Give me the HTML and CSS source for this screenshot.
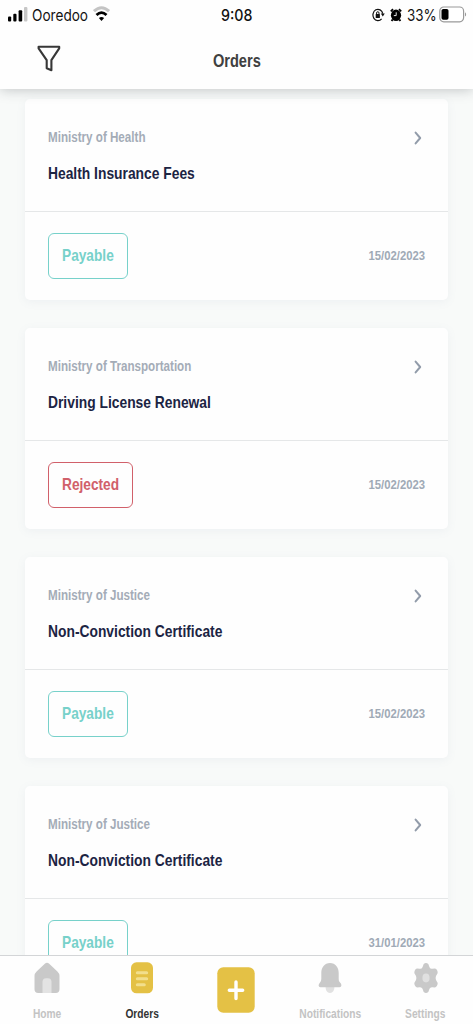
FILE: index.html
```html
<!DOCTYPE html>
<html lang="en">
<head>
<meta charset="utf-8">
<title>Orders</title>
<link rel="stylesheet" href="styles.css">
</head>
<body>
<div class="app">
  <header class="header">
    <div class="status">
      <div class="status-left">
        <svg class="signal" width="20" height="16" viewBox="0 0 20 16"><rect x="0" y="10.5" width="3.2" height="5" rx="1"/><rect x="5.3" y="7.7" width="3.2" height="7.8" rx="1"/><rect x="10.6" y="4.2" width="3.6" height="11.3" rx="1"/><rect x="16" y="1" width="3.4" height="14.5" rx="1" fill="#c6c6c6"/></svg>
        <span class="carrier">Ooredoo</span>
        <svg class="wifi" width="17" height="16" viewBox="0 0 17 16" fill="none"><path d="M1 5.2Q8.5-1.8 16 5.2" stroke="#c4c4c4" stroke-width="3"/><path d="M3.5 9Q8.5 4.3 13.5 9" stroke="#000" stroke-width="2.8"/><path d="M5.9 12Q8.5 10 11.1 12L8.5 15Z" fill="#000"/></svg>
      </div>
      <span class="time">9:08</span>
      <div class="status-right">
        <svg class="lock" width="13" height="14" viewBox="0 0 13 14" fill="none" stroke="#111"><path d="M9.6 10.9A5 5.7 0 1 1 10.8 5.6" stroke-width="1.2"/><path d="M8.8 5.6h4L10.8 8.6Z" fill="#111" stroke="none"/><rect x="3.7" y="6" width="4.2" height="4" rx=".6" fill="#111" stroke="none"/><path d="M4.6 6.3V5a1.2 1.3 0 0 1 2.4 0v1.3"/></svg>
        <svg class="alarm" width="12" height="14" viewBox="0 0 12 14"><ellipse cx="6" cy="7.3" rx="5.1" ry="5.8"/><path d="M.8 3.3 3 1.2M11.2 3.3 9 1.2M2.6 11.5 1.6 13.1M9.4 11.5l1 1.6" stroke="#000" stroke-width="1.8"/><path d="M6.2 4.3v3.3H3.8" fill="none" stroke="#fff" stroke-width=".9"/></svg>
        <span class="percent">33%</span>
        <svg class="battery" width="28" height="17" viewBox="0 0 28 17"><rect x=".8" y="1" width="23.8" height="14.8" rx="4" fill="#fff" stroke="#999" stroke-width="1.2"/><rect x="2.5" y="3" width="7" height="10.8" rx="1.8"/><path d="M26 6.2c1.5.8 1.5 3.6 0 4.4Z" fill="#999"/></svg>
      </div>
    </div>
    <div class="titlebar">
      <svg class="filter" width="24" height="27" viewBox="0 0 24 27" fill="none" stroke="#373737" stroke-width="2.1" stroke-linejoin="round"><path d="M1.6 1.8H22.2V3.3L14.4 15.2V25.2L9.7 23.3V15.2L1.6 3.3Z"/></svg>
      <h1 class="squeeze">Orders</h1>
    </div>
  </header>

  <main class="orders">
    <article class="card">
      <div class="summary">
        <div class="line"><span class="ministry squeeze">Ministry of Health</span><svg class="chevron" width="8" height="14" viewBox="0 0 8 14"><path d="M1.6 1.6 6.2 7 1.6 12.4"/></svg></div>
        <h2 class="squeeze">Health Insurance Fees</h2>
      </div>
      <div class="detail"><span class="badge payable"><span class="squeeze">Payable</span></span><time class="squeeze">15/02/2023</time></div>
    </article>
    <article class="card">
      <div class="summary">
        <div class="line"><span class="ministry squeeze">Ministry of Transportation</span><svg class="chevron" width="8" height="14" viewBox="0 0 8 14"><path d="M1.6 1.6 6.2 7 1.6 12.4"/></svg></div>
        <h2 class="squeeze">Driving License Renewal</h2>
      </div>
      <div class="detail"><span class="badge rejected"><span class="squeeze">Rejected</span></span><time class="squeeze">15/02/2023</time></div>
    </article>
    <article class="card">
      <div class="summary">
        <div class="line"><span class="ministry squeeze">Ministry of Justice</span><svg class="chevron" width="8" height="14" viewBox="0 0 8 14"><path d="M1.6 1.6 6.2 7 1.6 12.4"/></svg></div>
        <h2 class="squeeze">Non-Conviction Certificate</h2>
      </div>
      <div class="detail"><span class="badge payable"><span class="squeeze">Payable</span></span><time class="squeeze">15/02/2023</time></div>
    </article>
    <article class="card">
      <div class="summary">
        <div class="line"><span class="ministry squeeze">Ministry of Justice</span><svg class="chevron" width="8" height="14" viewBox="0 0 8 14"><path d="M1.6 1.6 6.2 7 1.6 12.4"/></svg></div>
        <h2 class="squeeze">Non-Conviction Certificate</h2>
      </div>
      <div class="detail"><span class="badge payable"><span class="squeeze">Payable</span></span><time class="squeeze">31/01/2023</time></div>
    </article>
  </main>

  <nav class="tabs">
    <a class="tab"><svg width="26" height="32" viewBox="0 0 26 32"><path d="M10.8 1.7Q13 0 15.2 1.7L23.4 9.4Q25.5 11.3 25.5 14V27Q25.5 31 21.8 31H4.2Q.5 31 .5 27V14Q.5 11.3 2.6 9.4Z" fill="#c9c9c9"/><path d="M8.5 31V20Q8.5 16.2 12 16.2H14Q17.5 16.2 17.5 20V31Z" fill="#e3e3e3"/></svg><span class="squeeze">Home</span></a>
    <a class="tab active"><svg width="22" height="32" viewBox="0 0 22 32"><rect y=".3" width="22" height="31" rx="5.5" fill="#e4c145"/><path d="M6.3 10.7h9.4M6.3 16.7h9.4M6.3 22.7h7" stroke="#f2df8d" stroke-width="3" stroke-linecap="round"/></svg><span class="squeeze">Orders</span></a>
    <a class="tab add"><svg width="38" height="46" viewBox="0 0 38 46"><rect x=".3" y=".3" width="37.4" height="45.4" rx="6" fill="#e4c145"/><path d="M19 15v16.5M12.3 23.3h13.4" stroke="#fff" stroke-width="3.4" stroke-linecap="round"/></svg></a>
    <a class="tab wide"><svg width="24" height="32" viewBox="0 0 24 32"><path d="M7.5 24h9Q16.5 31 12 31T7.5 24Z" fill="#e1e1e1"/><path d="M12 1C6.5 1 3.3 5.5 3.3 11V17Q3.3 19 2 20.5T.6 23.5Q.7 25.3 2.5 25.3H21.5Q23.3 25.3 23.4 23.5T22 20.5 20.7 17V11C20.7 5.5 17.5 1 12 1Z" fill="#c9c9c9"/></svg><span class="squeeze">Notifications</span></a>
    <a class="tab"><svg width="24" height="32" viewBox="0 0 24 32"><path d="M9.7 2Q12 0 14.3 2L15.5 5.2Q16.3 7 18.2 6.8L21 6.6Q23.6 7.5 23.7 11L22 14Q21.2 16 22 18L23.7 21Q23.6 24.5 21 25.4L18.2 25.2Q16.3 25 15.5 26.8L14.3 30Q12 32 9.7 30L8.5 26.8Q7.7 25 5.8 25.2L3 25.4Q.4 24.5.3 21L2 18Q2.8 16 2 14L.3 11Q.4 7.5 3 6.6L5.8 6.8Q7.7 7 8.5 5.2Z" fill="#c9c9c9"/><ellipse cx="12" cy="16" rx="3.6" ry="4.4" fill="#e0e0e0"/></svg><span class="squeeze">Settings</span></a>
  </nav>
</div>
</body>
</html>
```

FILE: styles.css
```css
* { box-sizing: border-box; }
body { margin: 0; background: #f8faf9; font-family: "Liberation Sans", Arial, sans-serif; }
.app { width: 473px; height: 1024px; display: flex; flex-direction: column; overflow: hidden; }

/* Condensed lettering used throughout the interface. */
.squeeze { display: inline-block; transform: scaleX(.83); transform-origin: left center; white-space: nowrap; font-weight: 700; }

.header { flex: none; height: 89px; background: #fefefe; box-shadow: 0 1px 12px rgba(40, 48, 56, .26); z-index: 1; }
.status { height: 30px; display: grid; grid-template-columns: 1fr auto 1fr; align-items: center; padding: 0 7px 0 8px; font-family: Inter, sans-serif; font-size: 16px; color: #111; }
.status-left, .status-right { display: flex; align-items: center; }
.status-right { justify-content: flex-end; margin-right: -1px; }
.signal { margin-right: 4px; margin-top: -2px; }
.carrier { width: 61px; transform: scaleX(.85); transform-origin: left; white-space: nowrap; }
.wifi { margin-top: -2px; }
.time { font-weight: 500; transform: scaleX(.89); }
.lock { margin-right: 5px; }
.alarm { margin-right: 5px; }
.percent { width: 32px; transform: scaleX(.84); transform-origin: left; white-space: nowrap; }
.battery { flex: none; margin-top: -2px; }

.titlebar { height: 59px; display: grid; grid-template-columns: 1fr auto 1fr; padding: 0 37px; }
.filter { margin-top: 15px; }
.titlebar h1 { margin: 21px 0 0; font-size: 17.6px; line-height: 20px; color: #404040; transform-origin: center; }

.orders { flex: 1; min-height: 0; overflow: hidden; padding: 10px 25px 0; display: flex; flex-direction: column; gap: 28px; }
.card { flex: none; height: 201px; background: #fefefe; border-radius: 5px; box-shadow: 0 2px 10px rgba(110, 130, 170, .08); }
.summary { height: 113px; border-bottom: 1px solid #e5e7e8; padding: 29px 23px 0; }
.line { display: flex; justify-content: space-between; height: 18px; align-items: center; }
.ministry { font-size: 14px; color: #a4acb7; }
.chevron { margin: 2px 3px 0 0; fill: none; stroke: #929caa; stroke-width: 2; stroke-linecap: round; stroke-linejoin: round; }
.summary h2 { margin: 17px 0 0; font-size: 16.5px; line-height: 20px; color: #1c2443; transform: scaleX(.838); }
.detail { height: 88px; padding: 0 23px; display: flex; align-items: center; justify-content: space-between; }
.badge { height: 46px; border: 1.5px solid; border-radius: 6px; display: flex; align-items: center; padding: 0 0 2px 13px; font-size: 16.5px; }
.payable { width: 80px; color: #77d1ca; }
.rejected { width: 85px; color: #d1606a; }
.detail time { margin-top: -2px; font-size: 13.6px; color: #a0aab6; transform-origin: right center; }

.tabs { flex: none; height: 69px; background: #fefefe; border-top: 1px solid #d3d5d7; display: grid; grid-template-columns: repeat(5, 1fr); }
.tab { min-width: 0; display: flex; flex-direction: column; align-items: center; padding-top: 6px; font-size: 12.3px; line-height: 16px; color: #c3c3c3; }
.tab .squeeze { margin-top: 12px; transform-origin: center; }
.tab svg { flex: none; }
.wide { padding-right: 2px; }
.active { color: #333; }
.add { padding-top: 11px; }
```
